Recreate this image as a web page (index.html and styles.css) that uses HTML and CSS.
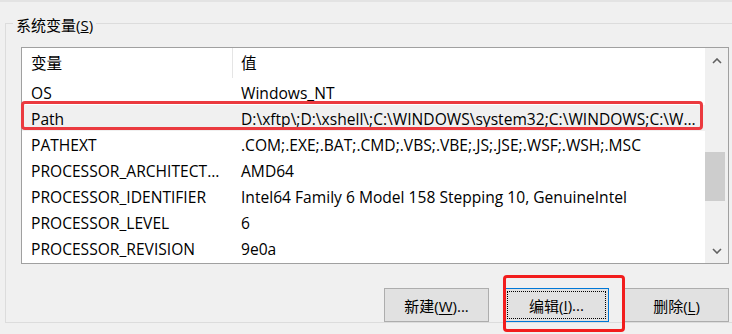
FILE: index.html
```html
<!DOCTYPE html>
<html>
	<head>
		<meta charset="utf-8" />
		<title>系统变量</title>
		<link rel="stylesheet" href="styles.css">
	</head>
	<body>
		<div class="topbar"></div>
		<!--系统变量分组-->
		<fieldset class="group">
			<legend>系统变量(<u>S</u>)</legend>
			<div class="listbox">
				<div class="table">
					<div class="row head">
						<div class="c-name">变量</div>
						<div class="c-val">值</div>
					</div>
					<div class="row"><div class="c-name">OS</div><div class="c-val">Windows_NT</div></div>
					<div class="row sel"><div class="c-name">Path</div><div class="c-val">D:\xftp\;D:\xshell\;C:\WINDOWS\system32;C:\WINDOWS;C:\WINDOWS\System32\Wbem</div></div>
					<div class="row"><div class="c-name">PATHEXT</div><div class="c-val">.COM;.EXE;.BAT;.CMD;.VBS;.VBE;.JS;.JSE;.WSF;.WSH;.MSC</div></div>
					<div class="row"><div class="c-name">PROCESSOR_ARCHITECTURE</div><div class="c-val">AMD64</div></div>
					<div class="row"><div class="c-name">PROCESSOR_IDENTIFIER</div><div class="c-val">Intel64 Family 6 Model 158 Stepping 10, GenuineIntel</div></div>
					<div class="row"><div class="c-name">PROCESSOR_LEVEL</div><div class="c-val">6</div></div>
					<div class="row"><div class="c-name">PROCESSOR_REVISION</div><div class="c-val">9e0a</div></div>
				</div>
				<!--滚动条-->
				<div class="scrollbar">
					<svg class="arrow" width="10" height="6" viewBox="0 0 10 6"><path d="M1 5 L5 1 L9 5" fill="none" stroke="#606060" stroke-width="1.6"/></svg>
					<div class="track"><div class="thumb"></div></div>
					<svg class="arrow" width="10" height="6" viewBox="0 0 10 6"><path d="M1 1 L5 5 L9 1" fill="none" stroke="#606060" stroke-width="1.6"/></svg>
				</div>
			</div>
			<!--按钮-->
			<div class="btns">
				<button class="btn">新建(<u>W</u>)...</button>
				<button class="btn focus"><span>编辑(<u>I</u>)...</span></button>
				<button class="btn">删除(<u>L</u>)</button>
			</div>
		</fieldset>
		<!--红色标注框-->
		<div class="mark mark-path"></div>
		<div class="mark mark-edit"></div>
	</body>
</html>
```

FILE: styles.css
```css
*{margin: 0;padding: 0;box-sizing: border-box;}
body{width: 732px;height: 334px;overflow: hidden;background: #f0f0f0;position: relative;font-family: "Open Sans", "Noto Sans CJK SC", sans-serif;font-size: 15.6px;color: #000;}
.topbar{height: 2px;background: #e3e3e3;}
/*分组框*/
.group{margin: 9px 0 0 5px;width: 780px;border: 1px solid #dcdcdc;padding: 12px 0 0 15px;}
.group legend{margin-left: -8px;padding: 4px 3px 0;line-height: 20px;font-size: 15px;}
/*列表*/
.listbox{display: flex;width: 708px;height: 217px;border: 1px solid #a0a0a0;background: #fff;}
.table{flex: 1;overflow: hidden;}
.row{display: flex;height: 26px;align-items: center;white-space: nowrap;line-height: 20px;padding-top: 1px;}
.row.head{height: 31px;padding: 0 0 1px;}
.row.head .c-name{border-right: 1px solid #e5e5e5;height: 100%;display: flex;align-items: center;}
.row.sel{background: #f0f0f0;}
.c-name{width: 211px;padding: 0 8px 0 9px;overflow: hidden;text-overflow: ellipsis;}
.c-val{flex: 1;padding: 0 6px 0 8px;overflow: hidden;text-overflow: ellipsis;}
/*滚动条*/
.scrollbar{width: 23px;background: #f0f0f0;display: flex;flex-direction: column;align-items: center;padding: 10px 0 9px;}
.track{flex: 1;width: 100%;padding: 0 3px 0 0;display: flex;flex-direction: column;}
.thumb{margin-top: 88px;height: 49px;background: #cdcdcd;}
.arrow{flex: none;}
/*按钮*/
.btns{display: flex;justify-content: flex-end;gap: 15px;width: 708px;margin-top: 24px;}
.btn{width: 105px;height: 34px;background: #e1e1e1;border: 1px solid #adadad;font: inherit;font-size: 15px;color: #000;}
.btn.focus{border: 1px solid #0078d7;padding: 2px;}
.btn.focus span{display: flex;align-items: center;justify-content: center;height: 100%;border: 1px dotted #000;}
.btn u{text-underline-offset: 2px;}
/*标注*/
.mark{position: absolute;border: 3px solid #eb3a3f;border-radius: 4px;}
.mark-path{left: 21px;top: 101px;width: 682px;height: 29px;}
.mark-edit{left: 503px;top: 275px;width: 122px;height: 57px;border-color: #f21d1d;}
```
